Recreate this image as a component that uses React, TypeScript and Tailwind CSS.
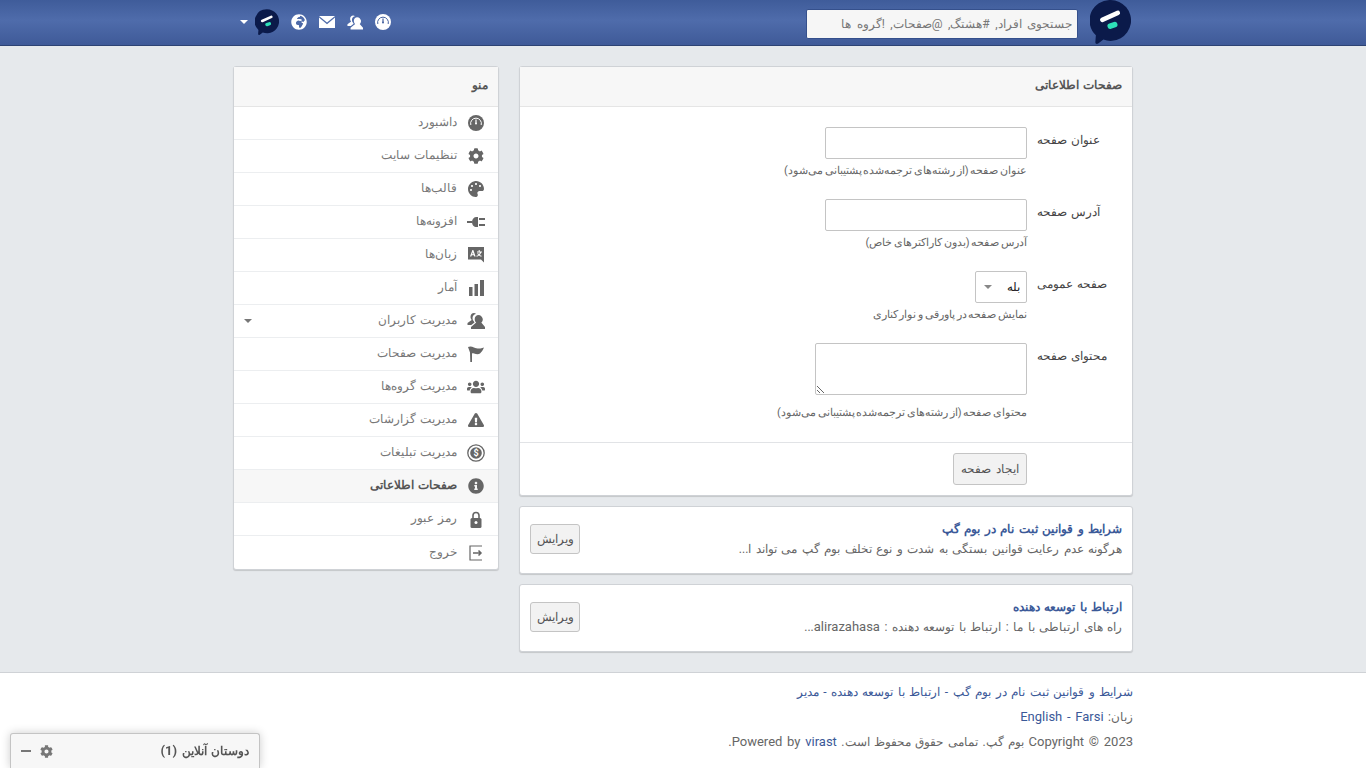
import { ReactNode } from 'react';
import { FaCog, FaExclamationTriangle, FaGlobeAfrica, FaInfoCircle, FaPalette, FaUsers } from 'react-icons/fa';

const Logo = ({ w, h }: { w: number; h: number }) => (
  <svg width={w} height={h} viewBox="0 0 40 44">
    <path d="M20 0a20 20 0 1 1-7 38.700l-5 3.800c-1.500 1-3 .3-2.800-1.500l.5-6.500A20 20 0 0 1 20 0z" fill="#0b1a4a" />
    <rect x="9" y="14" width="21" height="4.500" rx="2.200" fill="#fff" transform="rotate(-24 19 16)" />
    <rect x="17" y="22" width="10" height="5.500" rx="2.700" fill="#2de0b8" transform="rotate(-18 22 25)" />
  </svg>
);

const Gauge = ({ className, dial }: { className: string; dial: string }) => (
  <svg viewBox="0 0 16 16" className={className}>
    <circle cx="8" cy="8" r="8" fill="currentColor" />
    <path d="M2.800 10a5.400 5.400 0 1 1 10.400 0" fill="none" stroke={dial} strokeWidth="1" />
    <path d="M8 4.500v4" stroke={dial} strokeWidth="1.200" />
    <circle cx="8" cy="8.500" r="1" fill={dial} />
  </svg>
);

const UserIcon = ({ className }: { className: string }) => (
  <svg viewBox="0 0 18 16" className={className} fill="currentColor">
    <path d="M7 0C5 0 3.500 1.500 3.500 3.800c0 1.400.5 2.500 1.200 3.200L.5 10v2h3.800l3.200-2.500-.7-1.300C5.500 7 5.300 5 5.800 3.500 6.200 2.300 7.300 1.300 9 1 8.500.4 7.800 0 7 0z" />
    <path d="M11.500 2C9.300 2 7.700 3.700 7.700 6c0 1.600.6 2.900 1.500 3.600L4 14v2h14v-2l-3.700-4.400c.9-.7 1.500-2 1.500-3.600C15.300 3.700 13.700 2 11.500 2z" />
  </svg>
);

const PlugIcon = () => (
  <svg viewBox="0 0 18 12" className="w-[18px] h-3" fill="currentColor">
    <path d="M0 5h5v2H0zM5 6c0-3 2-5 4.500-5H11v10H9.500C7 11 5 9 5 6zM12 2h6v2h-6zM12 8h6v2h-6z" />
  </svg>
);

const LangIcon = () => (
  <svg viewBox="0 0 16 16" className="w-4 h-4" fill="currentColor">
    <path fillRule="evenodd" d="M0 0h16v15.500L13 12.500H0zM2 9.500h1.300l.5-1.300h2l.5 1.300h1.300L5.300 3H4.400zM4.200 7.200l.6-2 .6 2zM9 4.500h1.700V3h1v1.500h2.300v1h-.8c-.3 1-.8 1.800-1.400 2.400.5.400 1.100.7 1.900.9l-.4 1c-1-.3-1.700-.7-2.300-1.200-.6.500-1.400.9-2.300 1.200l-.4-1c.8-.2 1.400-.5 2-.9-.5-.5-.9-1.100-1.100-1.700h1c.2.400.4.700.8 1 .4-.4.700-.9.900-1.700H9z" />
  </svg>
);

const BarsIcon = () => (
  <svg viewBox="0 0 15 16" className="w-[15px] h-4" fill="currentColor">
    <path d="M0 7h3.500v9H0zM5.500 4H9v12H5.500zM11 0h4v16h-4z" />
  </svg>
);

const FlagIcon = () => (
  <svg viewBox="0 0 16 16" className="w-4 h-4" fill="currentColor">
    <path d="M0 1c2-1 4-.5 6 .5s4 1.200 6.500 1L16 1.500C15 4 13.500 6 12 7.500c-2 1.500-4 .5-6 0-.7-.2-1.300-.2-2-.1V16H2.300L2 6.500z" />
  </svg>
);

const DollarIcon = () => (
  <svg viewBox="0 0 18 18" className="w-[18px] h-[18px]">
    <circle cx="9" cy="9" r="8.200" fill="none" stroke="currentColor" strokeWidth="1.300" />
    <circle cx="9" cy="9" r="5.800" fill="currentColor" />
    <text x="9" y="12" textAnchor="middle" fontSize="9" fontWeight="700" fill="#fff" fontFamily="Roboto">$</text>
  </svg>
);

const LockIcon = () => (
  <svg viewBox="0 0 12 17" className="w-3 h-[17px]">
    <path d="M3 8V4.500a3 3 0 0 1 6 0V8" fill="none" stroke="currentColor" strokeWidth="1.600" />
    <rect x="0.500" y="7" width="11" height="10" rx="1.500" fill="currentColor" />
    <circle cx="6" cy="11.500" r="1.500" fill="#fff" />
  </svg>
);

const ExitIcon = () => (
  <svg viewBox="0 0 14 16" className="w-[14px] h-4" fill="none" stroke="currentColor" strokeWidth="1.200">
    <path d="M13 1H1v14h12" />
    <path d="M4 8h8M9.500 5.500 12 8l-2.500 2.500" strokeWidth="1.500" />
  </svg>
);

const Mail = () => (
  <svg viewBox="0 0 16 12" className="w-4 h-3" fill="currentColor">
    <path d="M0 0h16L8 6.500zM0 1.500v10.500h16V1.500L8 8.200z" />
  </svg>
);

const menuItems: { label: string; icon: ReactNode; active?: boolean; caret?: boolean }[] = [
  { label: 'داشبورد', icon: <Gauge className="w-4 h-4 text-[#666]" dial="#fff" /> },
  { label: 'تنظیمات سایت', icon: <FaCog className="w-4 h-4" /> },
  { label: 'قالب‌ها', icon: <FaPalette className="w-4 h-4" /> },
  { label: 'افزونه‌ها', icon: <PlugIcon /> },
  { label: 'زبان‌ها', icon: <LangIcon /> },
  { label: 'آمار', icon: <BarsIcon /> },
  { label: 'مدیریت کاربران', icon: <UserIcon className="w-[18px] h-4" />, caret: true },
  { label: 'مدیریت صفحات', icon: <FlagIcon /> },
  { label: 'مدیریت گروه‌ها', icon: <FaUsers className="w-[18px] h-[18px]" /> },
  { label: 'مدیریت گزارشات', icon: <FaExclamationTriangle className="w-4 h-4" /> },
  { label: 'مدیریت تبلیغات', icon: <DollarIcon /> },
  { label: 'صفحات اطلاعاتی', icon: <FaInfoCircle className="w-4 h-4" />, active: true },
  { label: 'رمز عبور', icon: <LockIcon /> },
  { label: 'خروج', icon: <ExitIcon /> },
];

const FormRow = ({ label, hint, className, children }: { label: string; hint: string; className: string; children: ReactNode }) => (
  <div className={`flex pr-[10px] ${className}`}>
    <label className="w-[85px] ml-[10px] pt-[3px] text-left text-[12px] text-[#444] leading-5 shrink-0">{label}</label>
    <div className="w-[300px]">
      {children}
      <p className="mt-[4px] text-[11px] [word-spacing:-1px] leading-4 text-[#666] whitespace-nowrap">{hint}</p>
    </div>
  </div>
);

const PageRow = ({ title, children }: { title: string; children: ReactNode }) => (
  <div className="mt-[10px] h-[68px] pb-[2px] flex items-center justify-between px-[10px] bg-white border border-[#cfd2d6] rounded-[3px] shadow-[0_1px_1px_rgba(0,0,0,0.15)]">
    <div>
      <div className="text-[12px] font-bold leading-[20px] text-[#3b5998]">{title}</div>
      <div className="text-[12px] leading-[20px] text-[#666]">{children}</div>
    </div>
    <button className="w-[50px] h-[30px] text-[12px] [word-spacing:1.5px] text-[#555] bg-[#f2f2f2] border border-[#c4c4c4] rounded-[3px]">ویرایش</button>
  </div>
);

export default function App() {
  return (
    <div dir="rtl" className="min-h-[768px] bg-[#e6e9ec] font-['Roboto','Noto_Sans',sans-serif] [word-spacing:1.5px] text-[#666]">
      <header className="h-[46px] bg-[linear-gradient(#3f5c9a,#4f6cab_45%,#3f5a98)] border-b border-[#2d4373]">
        <div className="w-[900px] mx-auto h-[45px] flex items-center pr-[2px]">
          <Logo w={41} h={45} />
          <input
            placeholder="جستجوی افراد, #هشتگ, @صفحات, !گروه ها"
            className="mr-3 mt-[2px] w-[272px] h-[30px] px-[5px] text-[12px] [word-spacing:2.5px] bg-[#f6f6f6] rounded-[2px] border border-[#35508c] placeholder:text-[#777]"
          />
          <div className="mr-auto flex items-center gap-[12px] text-white pl-[7px] pb-[1px]">
            <Gauge className="w-4 h-4 text-white" dial="#45619f" />
            <UserIcon className="w-4 h-[15px]" />
            <Mail />
            <FaGlobeAfrica className="w-4 h-4" />
            <Logo w={24} h={27} />
            <span className="-mr-[5px] w-0 h-0 border-x-4 border-x-transparent border-t-4 border-t-white" />
          </div>
        </div>
      </header>

      <main className="w-[900px] mx-auto pt-5 flex items-start justify-between">
        <div className="w-[614px]">
          <section className="bg-white border border-[#cfd2d6] rounded-[3px] shadow-[0_1px_1px_rgba(0,0,0,0.15)]">
            <h2 className="h-10 pb-[3px] flex items-center px-[10px] text-[12px] font-bold text-[#555] bg-[#f7f7f7] border-b border-[#e5e5e5]">صفحات اطلاعاتی</h2>
            <div className="pt-5 pb-[21px]">
              <FormRow label="عنوان صفحه" hint="عنوان صفحه (از رشته‌های ترجمه‌شده پشتیبانی می‌شود)" className="mb-[20px]">
                <input className="block w-[202px] h-8 bg-white border border-[#c4c4c4] rounded-[2px]" />
              </FormRow>
              <FormRow label="آدرس صفحه" hint="آدرس صفحه (بدون کاراکترهای خاص)" className="mb-[20px]">
                <input className="block w-[202px] h-8 bg-white border border-[#c4c4c4] rounded-[2px]" />
              </FormRow>
              <FormRow label="صفحه عمومی" hint="نمایش صفحه در پاورقی و نوار کناری" className="mb-[20px]">
                <div className="w-[52px] h-8 flex items-center justify-between px-[6px] text-[12px] text-[#222] border border-[#c4c4c4] rounded-[2px]">
                  <span>بله</span>
                  <span className="ml-[2px] w-0 h-0 border-x-4 border-x-transparent border-t-4 border-t-[#888]" />
                </div>
              </FormRow>
              <FormRow label="محتوای صفحه" hint="محتوای صفحه (از رشته‌های ترجمه‌شده پشتیبانی می‌شود)" className="">
                <textarea className="block mb-[10px] w-[212px] h-[52px] bg-white border border-[#c4c4c4] rounded-[2px]" />
              </FormRow>
            </div>
            <div className="h-[53px] flex items-center pr-[105px] border-t border-[#e1e3e6]">
              <button className="w-[74px] h-8 text-[12px] [word-spacing:1.5px] text-[#555] bg-[#f2f2f2] border border-[#c4c4c4] rounded-[3px]">ایجاد صفحه</button>
            </div>
          </section>
          <PageRow title="شرایط و قوانین ثبت نام در بوم گپ">هرگونه عدم رعایت قوانین بستگی به شدت و نوع تخلف بوم گپ می تواند ا...</PageRow>
          <PageRow title="ارتباط با توسعه دهنده">راه های ارتباطی با ما : ارتباط با توسعه دهنده : <span className="text-[13px] leading-none">alirazahasa</span>...</PageRow>
        </div>

        <aside className="w-[266px] bg-white border border-[#cfd2d6] rounded-[3px] shadow-[0_1px_1px_rgba(0,0,0,0.15)]">
          <h2 className="h-10 pb-[3px] flex items-center px-[10px] text-[12px] font-bold text-[#555] bg-[#f7f7f7] border-b border-[#e5e5e5]">منو</h2>
          {menuItems.map((item) => (
            <div
              key={item.label}
              className={`h-[33px] flex items-center border-b border-[#eceef0] last:border-b-0 text-[12px] ${item.active ? 'bg-[#f7f7f7] font-bold text-[#555]' : 'text-[#777]'}`}
            >
              <span className="w-[41px] pr-[3px] flex justify-center text-[#666] shrink-0">{item.icon}</span>
              <span className="pb-[2px]">{item.label}</span>
              {item.caret && <span className="mr-auto ml-[10px] w-0 h-0 border-x-4 border-x-transparent border-t-4 border-t-[#777]" />}
            </div>
          ))}
        </aside>
      </main>

      <footer className="mt-5 bg-white border-t border-[#cfd2d6] h-[96px]">
        <div className="w-[900px] mx-auto pt-[7px] text-[12px] leading-[25px]">
          <div className="h-[25px] text-[#3b5998]">شرایط و قوانین ثبت نام در بوم گپ - ارتباط با توسعه دهنده - مدیر</div>
          <div className="h-[25px]">زبان: <span className="text-[13px] leading-none text-[#3b5998]">English - Farsi</span></div>
          <div className="h-[25px]"><span className="text-[13px] leading-none">2023 © Copyright</span> بوم گپ. تمامی حقوق محفوظ است. <span className="text-[13px] leading-none">Powered by <span className="text-[#3b5998]">virast</span>.</span></div>
        </div>
      </footer>

      <div className="fixed bottom-0 left-[10px] w-[250px] h-[35px] flex items-center justify-between px-[10px] bg-[#f7f7f7] border border-b-0 border-[#c4c4c4] rounded-t-[3px] shadow-[0_0_10px_rgba(0,0,0,0.2)]">
        <span className="text-[12px] font-bold text-[#555]">دوستان آنلاین <span className="text-[13px] leading-none">(1)</span></span>
        <span className="flex items-center gap-[9px] text-[#777]">
          <FaCog className="w-[13px] h-[13px]" />
          <span className="w-[10px] h-[2px] bg-[#777]" />
        </span>
      </div>
    </div>
  );
}
